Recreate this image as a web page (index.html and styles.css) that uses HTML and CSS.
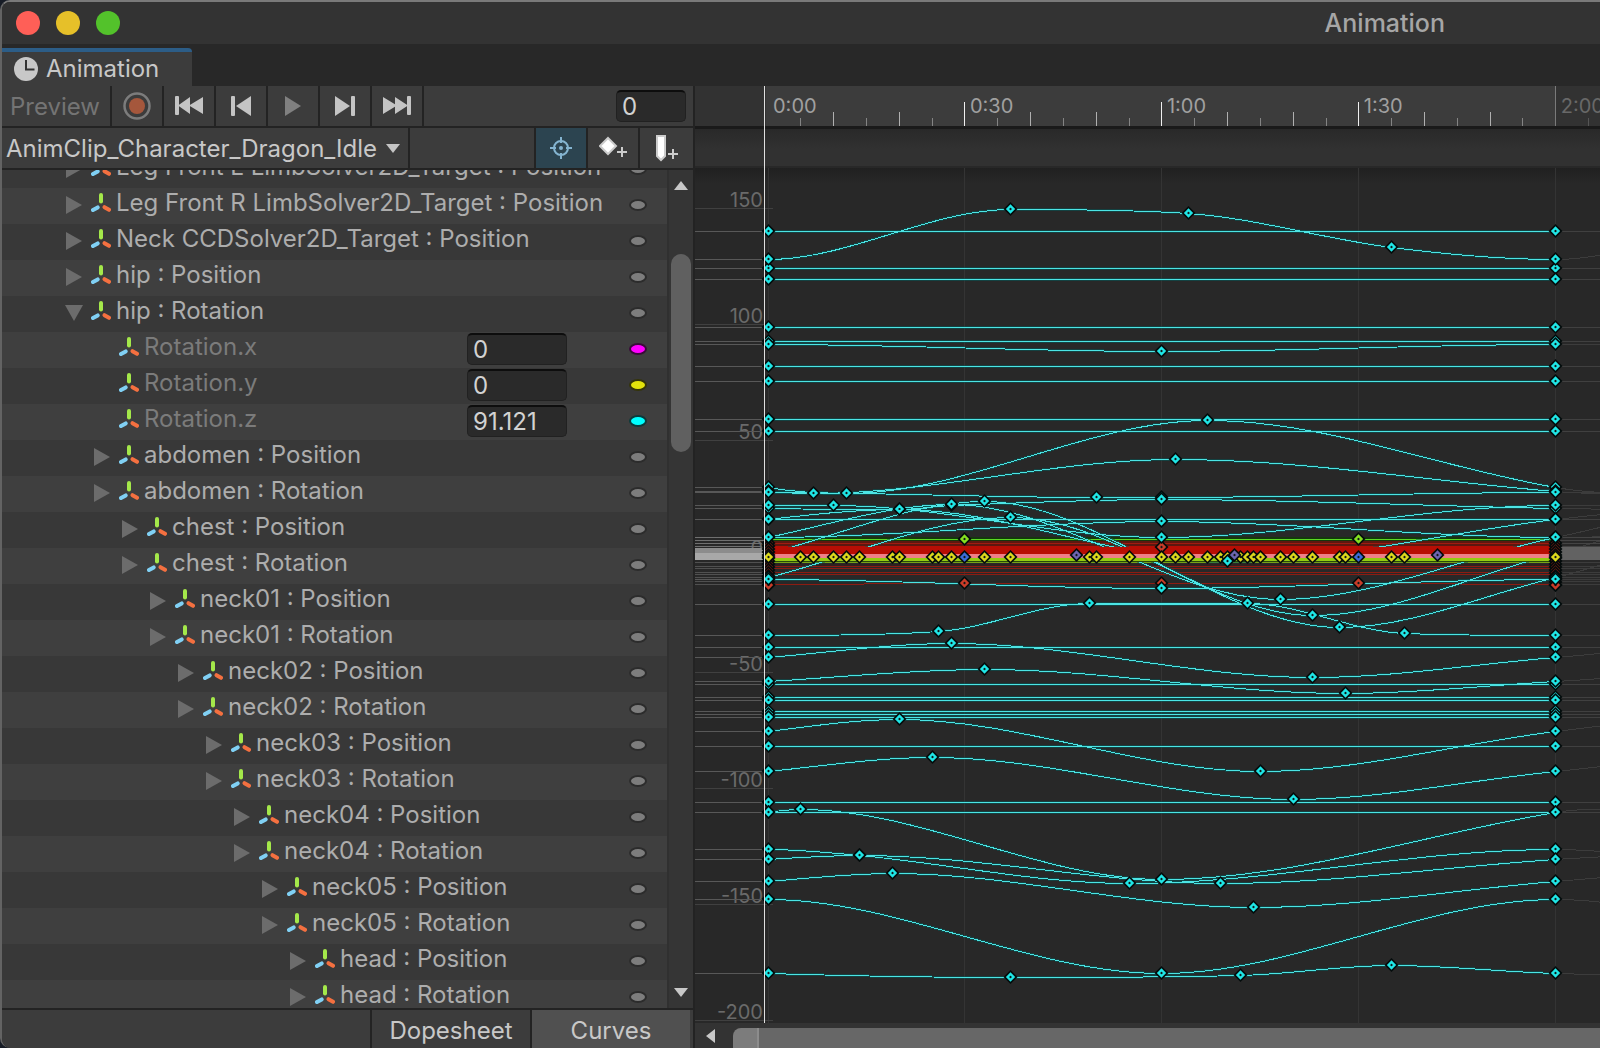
FILE: index.html
```html
<!DOCTYPE html>
<html lang="en">
<head>
    <meta charset="UTF-8">
    <meta name="viewport" content="width=device-width, initial-scale=1.0">
    <title>Animation</title>
    <link rel="stylesheet" href="styles.css">
</head>
<body>
    <svg class="symbols" aria-hidden="true">
        <symbol id="axes" viewBox="0 0 20 19">
            <path d="M10 2v6.600" stroke="#a4e84a"/>
            <path d="M2 17l4.700-2.600" stroke="#80d0f4"/>
            <path d="M13.500 14.200l4.500 2.600" stroke="#f47040"/>
        </symbol>
        <symbol id="closed" viewBox="0 0 18 18"><path d="M1 0l16 9-16 9z"/></symbol>
        <symbol id="opened" viewBox="0 0 18 18"><path d="M0 1h18l-9 16z"/></symbol>
    </svg>

    <div class="window">
        <header class="title-bar">
            <button class="light light-close" aria-label="Close"></button>
            <button class="light light-min" aria-label="Minimize"></button>
            <button class="light light-max" aria-label="Zoom"></button>
            <h1>Animation</h1>
        </header>

        <nav class="tabs">
            <button class="tab">
                <svg width="24" height="24" viewBox="0 0 24 24"><circle cx="12" cy="12" r="12" fill="#c8c8c8"/><path d="M12 3v9.500h8.500" fill="none" stroke="#333" stroke-width="2"/></svg>
                <span>Animation</span>
            </button>
        </nav>

        <main class="main">
            <section class="sidebar">
                <div class="toolbar">
                    <button class="tool preview">Preview</button>
                    <button class="tool" aria-label="Record"><svg width="28" height="28" viewBox="0 0 28 28"><circle cx="14" cy="14" r="12.500" fill="none" stroke="#7c7c7c" stroke-width="2.500"/><circle cx="14" cy="14" r="8" fill="#a5573c"/></svg></button>
                    <button class="tool" aria-label="First key"><svg width="28" height="20" viewBox="0 0 28 20"><rect width="4" height="19" rx="1"/><path d="M15 1v17L3 9.500zM28 1v17L14 9.500z"/></svg></button>
                    <button class="tool" aria-label="Previous key"><svg width="20" height="20" viewBox="0 0 20 20"><rect width="4" height="20" rx="1"/><path d="M20 0v20L5 10z"/></svg></button>
                    <button class="tool play" aria-label="Play"><svg width="18" height="20" viewBox="0 0 18 20"><path d="M1 0l16 10L1 20z"/></svg></button>
                    <button class="tool" aria-label="Next key"><svg width="20" height="20" viewBox="0 0 20 20"><rect x="16" width="4" height="20" rx="1"/><path d="M0 0v20l15-10z"/></svg></button>
                    <button class="tool" aria-label="Last key"><svg width="28" height="20" viewBox="0 0 28 20"><rect x="24" width="4" height="19" rx="1"/><path d="M0 1v17l14-8.500zM12 1v17l13-8.500z"/></svg></button>
                    <input class="field frame" type="text" value="0" aria-label="Frame">
                </div>

                <div class="toolbar">
                    <div class="clip">
                        <select aria-label="Clip"><option>AnimClip_Character_Dragon_Idle</option></select>
                    </div>
                    <button class="tool filter" aria-label="Filter by selection"><svg width="24" height="24" viewBox="0 0 24 24" fill="none" stroke="#84b4d0" stroke-width="2"><circle cx="12" cy="12" r="7"/><path d="M12 1v6M12 17v6M1 12h6M17 12h6"/><circle cx="12" cy="12" r="1"/></svg></button>
                    <button class="tool" aria-label="Add keyframe"><svg width="28" height="26" viewBox="0 0 28 26"><path d="M9 3l8 8-8 8-8-8z" fill="#fff" stroke="#ccc" stroke-width="2"/><path d="M23 12v10M18 17h10" stroke="#ccc" stroke-width="2"/></svg></button>
                    <button class="tool event" aria-label="Add event"><svg width="24" height="28" viewBox="0 0 24 28"><path d="M2 2h8v20l-4 4-4-4z" fill="#fff" stroke="#ccc" stroke-width="2"/><path d="M18 15v10M13 20h10" stroke="#ccc" stroke-width="2"/></svg></button>
                </div>

                <div class="hierarchy">
                    <ul class="rows">
                        <li class="row"><button class="fold" aria-label="Expand"><svg><use href="#closed"/></svg></button><svg class="axes"><use href="#axes"/></svg><span class="name">Leg Front L LimbSolver2D_Target : Position</span><button class="swatch" aria-label="Curve color"></button></li>
                        <li class="row"><button class="fold" aria-label="Expand"><svg><use href="#closed"/></svg></button><svg class="axes"><use href="#axes"/></svg><span class="name">Leg Front R LimbSolver2D_Target : Position</span><button class="swatch" aria-label="Curve color"></button></li>
                        <li class="row"><button class="fold" aria-label="Expand"><svg><use href="#closed"/></svg></button><svg class="axes"><use href="#axes"/></svg><span class="name">Neck CCDSolver2D_Target : Position</span><button class="swatch" aria-label="Curve color"></button></li>
                        <li class="row"><button class="fold" aria-label="Expand"><svg><use href="#closed"/></svg></button><svg class="axes"><use href="#axes"/></svg><span class="name">hip : Position</span><button class="swatch" aria-label="Curve color"></button></li>
                        <li class="row"><button class="fold" aria-label="Collapse"><svg><use href="#opened"/></svg></button><svg class="axes"><use href="#axes"/></svg><span class="name">hip : Rotation</span><button class="swatch" aria-label="Curve color"></button></li>
                        <li class="row level-1 channel"><span class="fold"></span><svg class="axes"><use href="#axes"/></svg><label class="name" for="rot-x">Rotation.x</label><input class="field" id="rot-x" type="text" value="0"><button class="swatch magenta" aria-label="Curve color"></button></li>
                        <li class="row level-1 channel"><span class="fold"></span><svg class="axes"><use href="#axes"/></svg><label class="name" for="rot-y">Rotation.y</label><input class="field" id="rot-y" type="text" value="0"><button class="swatch yellow" aria-label="Curve color"></button></li>
                        <li class="row level-1 channel"><span class="fold"></span><svg class="axes"><use href="#axes"/></svg><label class="name" for="rot-z">Rotation.z</label><input class="field" id="rot-z" type="text" value="91.121"><button class="swatch cyan" aria-label="Curve color"></button></li>
                        <li class="row level-1"><button class="fold" aria-label="Expand"><svg><use href="#closed"/></svg></button><svg class="axes"><use href="#axes"/></svg><span class="name">abdomen : Position</span><button class="swatch" aria-label="Curve color"></button></li>
                        <li class="row level-1"><button class="fold" aria-label="Expand"><svg><use href="#closed"/></svg></button><svg class="axes"><use href="#axes"/></svg><span class="name">abdomen : Rotation</span><button class="swatch" aria-label="Curve color"></button></li>
                        <li class="row level-2"><button class="fold" aria-label="Expand"><svg><use href="#closed"/></svg></button><svg class="axes"><use href="#axes"/></svg><span class="name">chest : Position</span><button class="swatch" aria-label="Curve color"></button></li>
                        <li class="row level-2"><button class="fold" aria-label="Expand"><svg><use href="#closed"/></svg></button><svg class="axes"><use href="#axes"/></svg><span class="name">chest : Rotation</span><button class="swatch" aria-label="Curve color"></button></li>
                        <li class="row level-3"><button class="fold" aria-label="Expand"><svg><use href="#closed"/></svg></button><svg class="axes"><use href="#axes"/></svg><span class="name">neck01 : Position</span><button class="swatch" aria-label="Curve color"></button></li>
                        <li class="row level-3"><button class="fold" aria-label="Expand"><svg><use href="#closed"/></svg></button><svg class="axes"><use href="#axes"/></svg><span class="name">neck01 : Rotation</span><button class="swatch" aria-label="Curve color"></button></li>
                        <li class="row level-4"><button class="fold" aria-label="Expand"><svg><use href="#closed"/></svg></button><svg class="axes"><use href="#axes"/></svg><span class="name">neck02 : Position</span><button class="swatch" aria-label="Curve color"></button></li>
                        <li class="row level-4"><button class="fold" aria-label="Expand"><svg><use href="#closed"/></svg></button><svg class="axes"><use href="#axes"/></svg><span class="name">neck02 : Rotation</span><button class="swatch" aria-label="Curve color"></button></li>
                        <li class="row level-5"><button class="fold" aria-label="Expand"><svg><use href="#closed"/></svg></button><svg class="axes"><use href="#axes"/></svg><span class="name">neck03 : Position</span><button class="swatch" aria-label="Curve color"></button></li>
                        <li class="row level-5"><button class="fold" aria-label="Expand"><svg><use href="#closed"/></svg></button><svg class="axes"><use href="#axes"/></svg><span class="name">neck03 : Rotation</span><button class="swatch" aria-label="Curve color"></button></li>
                        <li class="row level-6"><button class="fold" aria-label="Expand"><svg><use href="#closed"/></svg></button><svg class="axes"><use href="#axes"/></svg><span class="name">neck04 : Position</span><button class="swatch" aria-label="Curve color"></button></li>
                        <li class="row level-6"><button class="fold" aria-label="Expand"><svg><use href="#closed"/></svg></button><svg class="axes"><use href="#axes"/></svg><span class="name">neck04 : Rotation</span><button class="swatch" aria-label="Curve color"></button></li>
                        <li class="row level-7"><button class="fold" aria-label="Expand"><svg><use href="#closed"/></svg></button><svg class="axes"><use href="#axes"/></svg><span class="name">neck05 : Position</span><button class="swatch" aria-label="Curve color"></button></li>
                        <li class="row level-7"><button class="fold" aria-label="Expand"><svg><use href="#closed"/></svg></button><svg class="axes"><use href="#axes"/></svg><span class="name">neck05 : Rotation</span><button class="swatch" aria-label="Curve color"></button></li>
                        <li class="row level-8"><button class="fold" aria-label="Expand"><svg><use href="#closed"/></svg></button><svg class="axes"><use href="#axes"/></svg><span class="name">head : Position</span><button class="swatch" aria-label="Curve color"></button></li>
                        <li class="row level-8"><button class="fold" aria-label="Expand"><svg><use href="#closed"/></svg></button><svg class="axes"><use href="#axes"/></svg><span class="name">head : Rotation</span><button class="swatch" aria-label="Curve color"></button></li>
                    </ul>
                    <div class="scroll-y">
                        <button class="arrow" aria-label="Scroll up"><svg width="14" height="9" viewBox="0 0 14 9"><path d="M7 0l7 9H0z"/></svg></button>
                        <div class="track-y"><div class="thumb-y"></div></div>
                        <button class="arrow" aria-label="Scroll down"><svg width="14" height="9" viewBox="0 0 14 9"><path d="M0 0h14L7 9z"/></svg></button>
                    </div>
                </div>

                <footer class="modes">
                    <button class="mode">Dopesheet</button>
                    <button class="mode active">Curves</button>
                </footer>
            </section>

            <section class="timeline">
                <div class="canvas">
                    <div class="ruler-bg"></div>
                    <div class="event-bg"></div>
                    <div class="curve-bg"></div>
                    <svg class="graph" id="graph"></svg>
                </div>
                <div class="scroll-x">
                    <button class="arrow" aria-label="Scroll left"><svg width="9" height="14" viewBox="0 0 9 14"><path d="M9 0v14L0 7z"/></svg></button>
                    <div class="thumb-x"></div>
                </div>
            </section>
        </main>
    </div>

    <script src="graph.js"></script>
</body>
</html>
```
FILE: styles.css
```css
* {
    box-sizing: border-box;
}
body {
    margin: 0;
    background-color: #171c26;
    font-family: Inter, "Liberation Sans", sans-serif;
    font-size: 24px;
    color: #c8c8c8;
    overflow: hidden;
}
button, input, select {
    font: inherit;
    color: inherit;
    border: none;
    margin: 0;
    padding: 0;
    background: none;
}
.symbols {
    position: absolute;
    width: 0;
    height: 0;
}
.symbols path {
    fill: inherit;
    stroke-width: 4;
    stroke-linecap: round;
}
.window {
    display: flex;
    flex-direction: column;
    height: 100vh;
    border-top: 2px solid #7a7a7a;
    border-left: 2px solid #636363;
    border-radius: 10px 0 0 10px;
    background-color: #282828;
    overflow: hidden;
}

/* title bar */
.title-bar {
    display: flex;
    align-items: center;
    gap: 16px;
    height: 42px;
    padding: 0 155px 0 14px;
    background-color: #333;
}
.light {
    width: 24px;
    height: 24px;
    border-radius: 50%;
}
.light-close {
    background-color: #ff5f57;
}
.light-min {
    background-color: #e6c029;
}
.light-max {
    background-color: #53c22b;
}
.title-bar h1 {
    flex: 1;
    margin: 0;
    text-align: right;
    font-size: 25px;
    font-weight: 500;
    color: #a6a6a6;
}

/* tabs */
.tabs {
    display: flex;
    height: 42px;
    padding-top: 4px;
}
.tab {
    display: flex;
    align-items: center;
    gap: 8px;
    width: 190px;
    padding-left: 12px;
    border-top: 4px solid #2c5d87;
    border-radius: 0 4px 0 0;
    background-color: #3c3c3c;
}
.tab span {
    padding-bottom: 2px;
}

.main {
    flex: 1;
    display: grid;
    grid-template-columns: 693px 1fr;
    min-height: 0;
}
.sidebar {
    display: flex;
    flex-direction: column;
    min-height: 0;
    border-right: 2px solid #232323;
    background-color: #3c3c3c;
}

/* toolbars */
.toolbar {
    display: flex;
    align-items: center;
    height: 42px;
    border-bottom: 2px solid #232323;
}
.tool {
    display: flex;
    align-items: center;
    justify-content: center;
    width: 52px;
    height: 40px;
    border-right: 2px solid #232323;
    fill: #c4c4c4;
}
.preview {
    width: 110px;
    padding-right: 2px;
    color: #747474;
}
.play {
    fill: #808080;
}
.field {
    width: 100px;
    height: 32px;
    padding: 0 5px;
    border: 1px solid #212121;
    border-top: 2px solid #0d0d0d;
    border-radius: 5px;
    background-color: #2a2a2a;
    color: #d2d2d2;
}
.frame {
    width: 70px;
    margin-left: auto;
    margin-right: 7px;
}
.clip {
    position: relative;
    width: 408px;
    height: 40px;
    margin-right: auto;
    border-right: 2px solid #232323;
}
.clip select {
    width: 100%;
    height: 100%;
    padding-left: 4px;
    appearance: none;
}
.clip::after {
    content: "";
    position: absolute;
    right: 8px;
    top: 16px;
    border: 7px solid transparent;
    border-top: 9px solid #c4c4c4;
    border-bottom: none;
    pointer-events: none;
}
.filter {
    width: 54px;
    border-left: 2px solid #232323;
    background-color: #2c4450;
}
.event {
    width: 53px;
    border-right: none;
}

/* property list */
.hierarchy {
    flex: 1;
    display: flex;
    min-height: 0;
    overflow: hidden;
}
.rows {
    flex: 1;
    margin: -18px 0 0;
    padding: 0;
    list-style: none;
}
.row {
    display: flex;
    align-items: center;
    height: 36px;
    padding: 0 20px 2px 63px;
    background-color: #383838;
    color: #adadad;
}
.row:nth-child(even) {
    background-color: #3f3f3f;
}
.level-1 { padding-left: 91px; }
.level-2 { padding-left: 119px; }
.level-3 { padding-left: 147px; }
.level-4 { padding-left: 175px; }
.level-5 { padding-left: 203px; }
.level-6 { padding-left: 231px; }
.level-7 { padding-left: 259px; }
.level-8 { padding-left: 287px; }
.fold {
    display: flex;
    width: 18px;
    height: 18px;
    fill: #6c6c6c;
}
.fold svg {
    width: 18px;
    height: 18px;
}
.axes {
    width: 20px;
    height: 19px;
    margin: 0 5px 6px 8px;
}
.name {
    flex: 1;
    padding-bottom: 5px;
    white-space: nowrap;
}
.channel .name {
    color: #7b7b7b;
}
.channel .field {
    margin-right: 62px;
}
.swatch {
    width: 18px;
    height: 12px;
    border: 2px solid #2c2c2c;
    border-radius: 50%;
    background-color: #7d7d7d;
}
.magenta {
    background-color: #ff00ff;
    border-color: #3a0a3a;
}
.yellow {
    background-color: #e2e20c;
    border-color: #34340a;
}
.cyan {
    background-color: #00ffff;
    border-color: #0a3a3a;
}

/* scrollbars */
.scroll-y {
    display: flex;
    flex-direction: column;
    align-items: center;
    width: 26px;
    padding: 11px 0;
    border-left: 2px solid #303030;
    background-color: #353535;
}
.arrow {
    display: flex;
    fill: #c8c8c8;
}
.track-y {
    flex: 1;
    padding-top: 64px;
}
.thumb-y {
    width: 20px;
    height: 198px;
    border-radius: 10px;
    background-color: #606060;
}
.scroll-x {
    display: flex;
    align-items: center;
    height: 25px;
    padding-left: 11px;
    background-color: #333;
}
.thumb-x {
    flex: 1;
    align-self: stretch;
    margin: 5px 0 0 18px;
    border-radius: 8px 0 0 0;
    background: linear-gradient(to right, #7c7c7c 24px, #8c8c8c 24px, #8c8c8c 26px, #676767 26px);
}

.modes {
    display: flex;
    justify-content: flex-end;
    height: 40px;
    padding-right: 3px;
    border-top: 2px solid #232323;
}
.mode {
    width: 160px;
    padding-top: 2px;
    border-left: 2px solid #232323;
}
.mode.active {
    background-color: #505050;
}

/* curve view */
.timeline {
    display: flex;
    flex-direction: column;
    min-width: 0;
    min-height: 0;
}
.canvas {
    flex: 1;
    position: relative;
    display: flex;
    flex-direction: column;
    min-height: 0;
    overflow: hidden;
}
.ruler-bg {
    height: 43px;
    border-bottom: 3px solid #1a1a1a;
    background-color: #323232;
}
.event-bg {
    height: 39px;
    border-bottom: 2px solid #282828;
    background: linear-gradient(to bottom, #292929, #313131 20px);
}
.curve-bg {
    flex: 1;
    background: linear-gradient(to bottom, #202020, #282828 16px);
}
/* lies over the three backgrounds */
.graph {
    position: absolute;
    left: 0;
    top: 0;
    width: 100%;
    height: 100%;
}
.graph text {
    font-size: 20px;
    fill: #a0a0a0;
}
.graph .y-label {
    fill: #6a6a6a;
    text-anchor: end;
}
.graph .faded {
    fill: #686868;
}
.graph .crisp {
    fill: none;
    shape-rendering: crispEdges;
}
```
FILE: graph.js
```
const graph = document.getElementById('graph');
const FRAME_WIDTH = 6.565;
const FIRST_FRAME = 73;
const LENGTH = 120;
const ZERO = 470;
const UNIT = 2.32;

// curve keys: [frame, height below the top of the view]
const flat = [145, 182, 193, 241, 255, 280, 295, 333, 345, 433, 518, 561, 598, 611, 614, 625, 628, 631, 660, 716, 726];
const curves = [
    [[0, 173], [37, 123], [64, 127], [95, 161]],
    [[0, 258], [60, 265]],
    [[0, 401], [12, 407], [67, 334]],
    [[0, 405], [7, 407], [62, 373]],
    [[0, 406], [50, 411], [60, 411]],
    [[0, 422], [20, 423], [28, 419], [60, 413]],
    [[0, 419], [10, 419], [60, 451]],
    [[0, 433], [20, 423], [70, 475]],
    [[0, 451], [28, 418], [78, 513]],
    [[0, 467], [33, 415], [83, 529]],
    [[0, 491], [37, 431], [87, 541]],
    [[0, 451], [60, 435]],
    [[0, 493], [60, 502]],
    [[0, 549], [26, 545], [49, 517], [73, 517], [97, 547]],
    [[0, 571], [28, 557], [83, 591]],
    [[0, 595], [33, 583], [88, 607]],
    [[0, 645], [20, 633], [75, 685]],
    [[0, 685], [25, 671], [80, 713]],
    [[0, 726], [5, 723], [60, 793]],
    [[0, 763], [14, 769], [55, 797]],
    [[0, 773], [14, 769], [69, 797]],
    [[0, 795], [19, 787], [74, 821]],
    [[0, 813], [60, 887]],
    [[0, 887], [37, 891], [72, 889], [95, 879]]
];
const yellowFrames = [5, 7, 10, 12, 14, 19, 20, 25, 26, 28, 33, 37, 49, 50, 55, 60, 62, 64, 67, 69, 70, 72, 73, 74, 75, 78, 80, 83, 87, 88, 95, 97];

function x(frame) {
    return FIRST_FRAME + frame * FRAME_WIDTH;
}

function add(name, attributes, text) {
    const el = document.createElementNS('http://www.w3.org/2000/svg', name);
    for (const key in attributes) {
        el.setAttribute(key, attributes[key]);
    }
    if (text !== undefined) {
        el.textContent = text;
    }
    graph.appendChild(el);
}

function line(x1, y1, x2, y2, color) {
    add('path', { d: `M${x1} ${y1}L${x2} ${y2}`, stroke: color, class: 'crisp' });
}

function hline(y, from, to, color) {
    line(from, y + 0.5, to, y + 0.5, color);
}

// the clip loops, so the ends take their slope from the neighbouring cycle
function slope(prev, key, next) {
    const a = (key[1] - prev[1]) / (key[0] - prev[0]);
    const b = (next[1] - key[1]) / (next[0] - key[0]);
    if (a * b <= 0) {
        return 0;
    }
    const s = (next[1] - prev[1]) / (next[0] - prev[0]);
    return Math.sign(s) * Math.min(Math.abs(s), 3 * Math.abs(a), 3 * Math.abs(b));
}

function curvePath(keys, offset) {
    const n = keys.length;
    const at = i => [keys[(i + n) % n][0] + Math.floor(i / n) * LENGTH, keys[(i + n) % n][1]];
    let d = '';
    for (let i = 0; i < n; i++) {
        const k0 = at(i), k1 = at(i + 1);
        const s0 = slope(at(i - 1), k0, k1);
        const s1 = slope(k0, k1, at(i + 2));
        const third = (k1[0] - k0[0]) / 3;
        if (i === 0) {
            d += `M${x(k0[0] + offset)} ${k0[1] + 0.5}`;
        }
        d += `C${x(k0[0] + offset + third)} ${k0[1] + 0.5 + s0 * third} ${x(k1[0] + offset - third)} ${k1[1] + 0.5 - s1 * third} ${x(k1[0] + offset)} ${k1[1] + 0.5}`;
    }
    return d;
}

function key(frame, y, color) {
    const cx = Math.floor(x(frame)) + 0.5;
    add('path', { d: `M${cx - 7} ${y}l7-7 7 7-7 7z`, fill: '#040c0c' });
    add('path', { d: `M${cx - 3} ${y}l3-3 3 3-3 3z`, fill: '#101818', stroke: color, 'stroke-width': 2.4 });
}

function drawRuler() {
    add('rect', { x: 71, y: 0, width: x(LENGTH) - 71, height: 40, fill: '#3c3c3c' });
    for (let f = 5; f <= 125; f += 5) {
        const px = Math.floor(x(f)) + 0.5;
        if (f === LENGTH) {
            line(px, 0, px, 40, '#7a7a7a');
        } else if (f % 30 === 0) {
            line(px, 16, px, 40, '#f0f0f0');
        } else if (f % 10 === 0) {
            line(px, 26, px, 40, '#b0b0b0');
        } else {
            line(px, 32, px, 40, f > LENGTH ? '#555' : '#848484');
        }
    }
    ['0:00', '0:30', '1:00', '1:30', '2:00'].forEach((label, i) => {
        add('text', { x: x(i * 30) + 5, y: 27, class: i === 4 ? 'faded' : '' }, label);
    });
}

function drawGrid() {
    for (let f = 0; f <= LENGTH; f += 30) {
        const px = Math.floor(x(f)) + 0.5;
        line(px, 82, px, 937, '#343434');
    }
    for (let v = 150; v >= -200; v -= 50) {
        const y = Math.floor(ZERO - v * UNIT);
        hline(y, 0, 78, '#404040');
        add('text', { x: 68, y: y - 1, class: 'y-label' }, v);
    }
}

function drawOutside() {
    const end = x(LENGTH);
    flat.forEach(y => {
        hline(y, 0, 70, '#585858');
        hline(y, end, 3000, '#404040');
    });
    curves.forEach(keys => {
        hline(keys[0][1], 0, 70, '#585858');
        add('path', { d: curvePath(keys, LENGTH), stroke: '#3c3c3c', class: 'crisp' });
    });
    for (let y = 451; y < 462; y += 3) {
        hline(y, 0, 70, '#707070');
        hline(y, end, 3000, '#444');
    }
    [476, 480, 482, 486, 488, 491, 495, 498].forEach(y => {
        hline(y, 0, 70, '#505050');
        hline(y, end, 3000, '#3c3c3c');
    });
    add('rect', { x: 0, y: 462, width: 70, height: 7, fill: '#8c8c8c' });
    add('rect', { x: 0, y: 467, width: 70, height: 7, fill: '#a8a8a8' });
    add('rect', { x: end, y: 461, width: 3000, height: 13, fill: '#626262' });
}

function drawCurves() {
    const end = x(LENGTH);
    const paths = flat.map(y => `M${x(0)} ${y + 0.5}H${end}`).concat(curves.map(keys => curvePath(keys, 0)));
    paths.forEach(d => add('path', { d: d, stroke: '#005c5c', 'stroke-opacity': 0.5, 'stroke-width': 3, class: 'crisp' }));
    paths.forEach(d => add('path', { d: d, stroke: '#4ce4e4', class: 'crisp' }));
}

// position curves bunch up around zero: [top, height, color]
const bandBack = [
    [451, 4, '#14380c'], [453, 1, '#5cd824'], [455, 6, '#5c1810'], [457, 1, '#a01c10'], [460, 1, '#b80e04'],
    [476, 1, '#78a018'], [478, 3, '#302020'], [480, 1, '#8c1c12'], [482, 1, '#8c1c12'],
    [486, 1, '#8c1c12'], [488, 1, '#8c1c12']
];
const bandFront = [
    [461, 8, '#b80e04'], [468, 4, '#f08088'], [472, 3, '#94cc10'], [475, 1, '#28480c']
];

function drawBand(bars) {
    bars.forEach(b => add('rect', { x: x(0), y: b[0], width: LENGTH * FRAME_WIDTH, height: b[1], fill: b[2] }));
}

function drawKeys() {
    const cyan = '#1fe6e6', red = '#c83c28', yellow = '#dcd81c', green = '#84e020', blue = '#3c6cd8', purple = '#6c64b0';
    const ends = [0, LENGTH];

    ends.forEach(f => {
        for (let y = 457; y < 500; y += 3) {
            key(f, y, '#7a1c10');
        }
        key(f, 499, red);
        flat.forEach(y => key(f, y, cyan));
        curves.filter(keys => keys[0][1] !== 467).forEach(keys => key(f, keys[0][1], cyan));
        key(f, 471, yellow);
    });
    [30, 60, 90].forEach(f => key(f, 497, red));
    key(60, 461, red);
    key(30, 453, green);
    key(90, 453, green);
    key(47, 469, purple);
    yellowFrames.forEach(f => key(f, 471, yellow));
    key(30, 471, blue);
    key(90, 471, blue);
    key(71, 469, purple);
    key(102, 469, purple);
    curves.forEach(keys => keys.slice(1).forEach(k => key(k[0], k[1], cyan)));
}

drawGrid();
drawOutside();
drawBand(bandBack);
add('path', { d: curvePath([[0, 498], [30, 497], [90, 497]], 0), stroke: '#8c1c12', class: 'crisp' });
drawCurves();
drawBand(bandFront);
drawKeys();
drawRuler();
line(69.5, 0, 69.5, 937, '#e0e0e0');
```
